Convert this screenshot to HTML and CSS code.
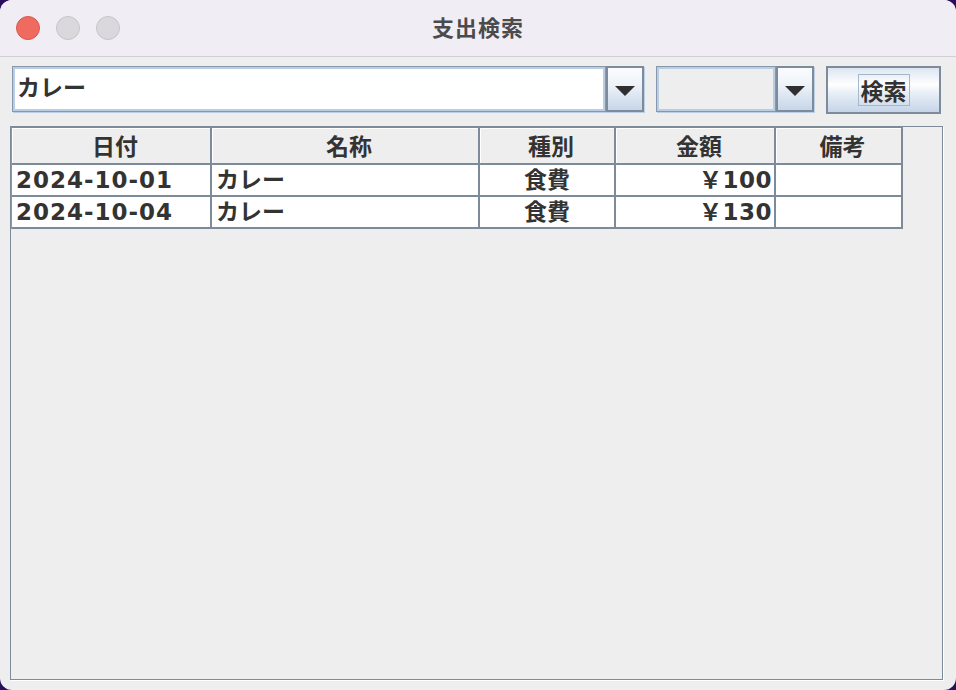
FILE: index.html
```html
<!DOCTYPE html>
<html lang="ja">
<head>
<meta charset="utf-8">
<title>支出検索</title>
<link rel="stylesheet" href="styles.css">
</head>
<body>
<div class="window">
  <div class="titlebar">
    <div class="lights">
      <span class="light red"></span>
      <span class="light"></span>
      <span class="light"></span>
    </div>
    <div class="title">支出検索</div>
    <div class="spacer"></div>
  </div>
  <div class="content">
    <div class="toolbar">
      <div class="combo combo-name">
        <div class="field">カレー</div>
        <div class="arrow-btn"><span class="tri"></span></div>
      </div>
      <div class="combo combo-type">
        <div class="field empty"></div>
        <div class="arrow-btn"><span class="tri"></span></div>
      </div>
      <button class="search"><span class="focus">検索</span></button>
    </div>
    <div class="scroll">
      <div class="table">
        <div class="row head">
          <div class="cell c1">日付</div>
          <div class="cell c2">名称</div>
          <div class="cell c3">種別</div>
          <div class="cell c4">金額</div>
          <div class="cell c5">備考</div>
        </div>
        <div class="row body">
          <div class="cell c1 left date">2024-10-01</div>
          <div class="cell c2 left">カレー</div>
          <div class="cell c3 center">食費</div>
          <div class="cell c4 right">￥100</div>
          <div class="cell c5"></div>
        </div>
        <div class="row body">
          <div class="cell c1 left date">2024-10-04</div>
          <div class="cell c2 left">カレー</div>
          <div class="cell c3 center">食費</div>
          <div class="cell c4 right">￥130</div>
          <div class="cell c5"></div>
        </div>
      </div>
    </div>
  </div>
</div>
</body>
</html>
```

FILE: styles.css
```css
html, body {
  margin: 0;
  padding: 0;
}
body {
  background: #2b0f5e;
  width: 956px;
  height: 690px;
  overflow: hidden;
  font-family: "DejaVu Sans", "Noto Sans CJK JP", sans-serif;
  color: #333333;
}
.window {
  width: 956px;
  height: 690px;
  border-radius: 12px;
  overflow: hidden;
  background: #eeeeee;
  display: flex;
  flex-direction: column;
}
.titlebar {
  height: 56px;
  flex: none;
  background: #f0eef4;
  border-bottom: 1px solid #d2d0d6;
  display: grid;
  grid-template-columns: 1fr auto 1fr;
  align-items: center;
}
.lights {
  display: flex;
  gap: 16px;
  padding-left: 16px;
}
.light {
  width: 24px;
  height: 24px;
  box-sizing: border-box;
  border-radius: 50%;
  background: #dad8dd;
  border: 1px solid #c6c4c9;
}
.light.red {
  background: #ef6b5f;
  border-color: #d9584d;
}
.title {
  font-family: "Noto Sans CJK JP", sans-serif;
  font-weight: 700;
  font-size: 22px;
  letter-spacing: 1px;
  color: #4b4b4d;
  line-height: 1;
  margin-bottom: 4px;
}
.content {
  flex: 1;
  display: flex;
  flex-direction: column;
  padding: 9px 13px 10px 10px;
}
.toolbar {
  display: flex;
  align-items: flex-start;
  gap: 12px;
  margin-left: 2px;
  margin-bottom: 12px;
  height: 48px;
}
.combo {
  display: flex;
  height: 46px;
  box-shadow: 1px 1px 0 #bccfe3;
}
.combo-name { width: 632px; }
.combo-type { width: 158px; }
.field {
  flex: 1;
  box-sizing: border-box;
  height: 46px;
  background: #ffffff;
  border: 1px solid #8898aa;
  box-shadow: inset 0 0 0 2px #b9cee5;
  font-weight: 700;
  font-size: 23px;
  line-height: 42px;
  padding-left: 4px;
  color: #333333;
}
.field.empty {
  background: #eeeeee;
}
.arrow-btn {
  width: 38px;
  flex: none;
  box-sizing: border-box;
  height: 46px;
  border: 2px solid #7d8b9a;
  background: linear-gradient(to bottom, #fbfcfe 0%, #eef3f9 40%, #c6d6e8 100%);
  display: flex;
  align-items: center;
  justify-content: center;
}
.tri {
  width: 0;
  height: 0;
  border-left: 10px solid transparent;
  border-right: 10px solid transparent;
  border-top: 10px solid #2f2f2f;
  margin-top: 3px;
}
.search {
  width: 115px;
  height: 48px;
  box-sizing: border-box;
  border: 2px solid #7d8b9a;
  border-radius: 0;
  background: linear-gradient(to bottom, #dce6f1 0%, #ffffff 38%, #eaf0f7 55%, #c5d5e8 100%);
  display: flex;
  align-items: center;
  justify-content: center;
  padding: 0;
  font-family: "Noto Sans CJK JP", sans-serif;
  font-weight: 700;
  font-size: 23px;
  color: #333333;
}
.focus {
  border: 1px solid #a4b8cc;
  padding: 0 2px;
  line-height: 30px;
  height: 30px;
}
.scroll {
  width: 933px;
  height: 554px;
  box-sizing: border-box;
  border: 1px solid #7d8a99;
  box-shadow: 1px 1px 0 #ffffff;
  background: #eeeeee;
}
.table {
  display: flex;
  flex-direction: column;
  width: 892px;
  border-left: 1px solid #8b98a6;
}
.row {
  display: grid;
  grid-template-columns: 200px 268px 136px 160px 127px;
}
.cell {
  box-sizing: border-box;
  border-right: 2px solid #7d8a99;
  border-bottom: 2px solid #7d8a99;
  font-weight: 700;
  font-size: 23px;
  white-space: nowrap;
  overflow: hidden;
  color: #333333;
}
.head .cell {
  height: 38px;
  line-height: 35px;
  background: #eeeeee;
  text-align: center;
  padding-left: 8px;
  box-shadow: inset 1px 1px 0 #ffffff;
  border-top: 1px solid #7d8a99;
  font-family: "Noto Sans CJK JP", sans-serif;
}
.body .cell {
  height: 32px;
  line-height: 30px;
  background: #ffffff;
}
.left { padding-left: 4px; }
.date { letter-spacing: 1px; }
.center { text-align: center; }
.right { text-align: right; padding-right: 2px; letter-spacing: 0.5px; }
```
